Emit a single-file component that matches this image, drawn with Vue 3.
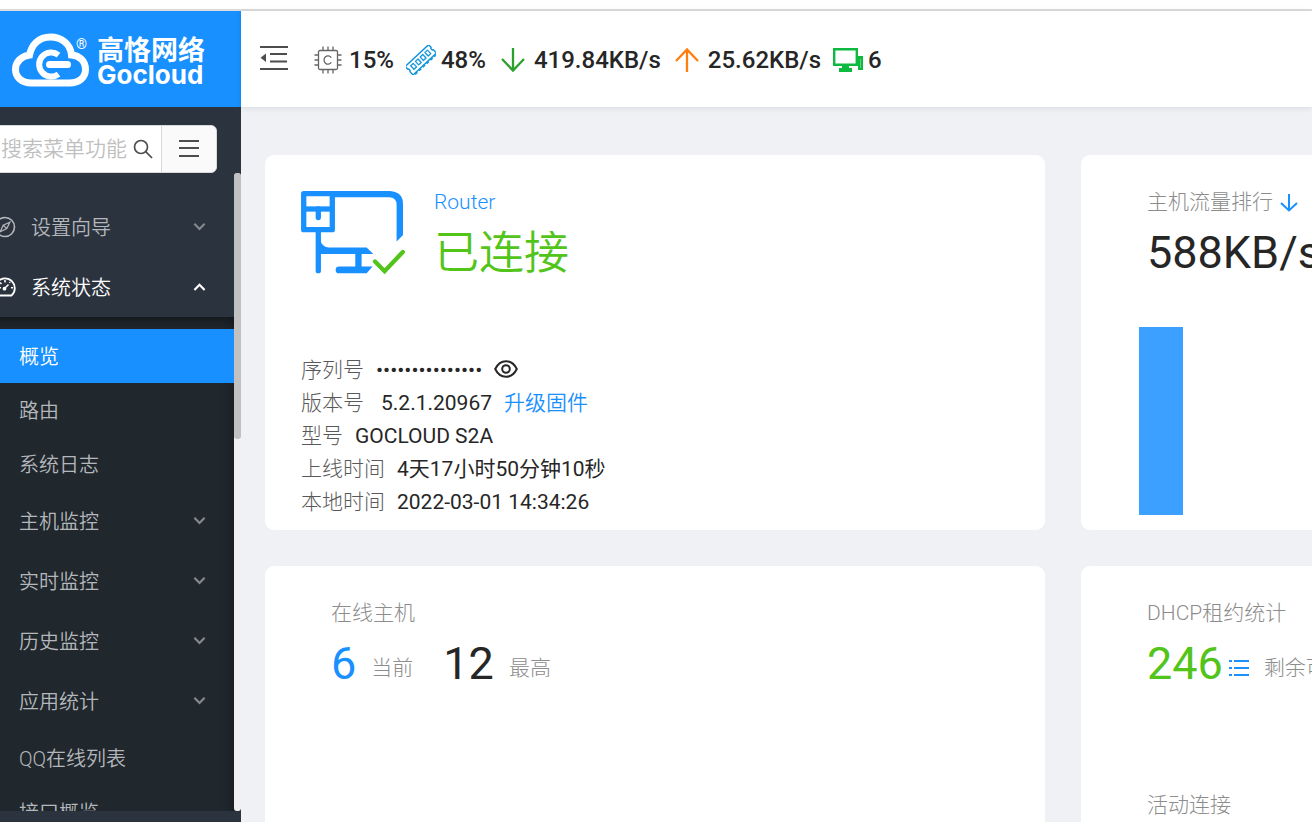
<script setup>
import { ref } from 'vue'

const keyword = ref('')
const showSerial = ref(false)

const topMenu = [
  { label: '设置向导', icon: 'compass', open: false },
  { label: '系统状态', icon: 'dashboard', open: true },
]

const subMenu = [
  { label: '概览', active: true },
  { label: '路由' },
  { label: '系统日志' },
  { label: '主机监控', group: true },
  { label: '实时监控', group: true },
  { label: '历史监控', group: true },
  { label: '应用统计', group: true },
  { label: 'QQ在线列表' },
  { label: '接口概览' },
]

const hostTraffic = [188]
</script>

<template>
  <div class="page">
    <div class="shell">
      <aside class="side">
        <a class="brand" href="#">
          <svg class="brand-mark" viewBox="0 0 78 56" aria-hidden="true">
            <path d="M20 50 H58 C68 50 74 44 74 36.500 C74 28 68 22.500 60 22 C59 11 50 4 39 4 C27 4 20 12 18 22 C10 23 4 29 4 36.500 C4 44 10 50 20 50 Z" fill="none" stroke="#fff" stroke-width="7" />
            <path d="M47 22 A12 12 0 1 0 47 41" fill="none" stroke="#fff" stroke-width="6" />
            <path d="M38 31.500 H56" stroke="#fff" stroke-width="7" stroke-linecap="round" />
          </svg>
          <span class="brand-reg">®</span>
          <span class="brand-text">
            <span class="brand-cn">高恪网络</span>
            <span class="brand-en">Gocloud</span>
          </span>
        </a>

        <form class="search" role="search" @submit.prevent>
          <input v-model="keyword" type="text" aria-label="搜索菜单功能" placeholder="搜索菜单功能" />
          <button class="search-go" type="submit" aria-label="搜索">
            <svg viewBox="0 0 20 20" width="20" height="20" fill="none" stroke="#4d4d4d" stroke-width="1.700">
              <circle cx="8" cy="8" r="6.500" />
              <path d="M12.700 12.700 L19 19" />
            </svg>
          </button>
          <button class="search-list" type="button" aria-label="菜单">
            <svg viewBox="0 0 20 18" width="20" height="18" stroke="#4d4d4d" stroke-width="2">
              <path d="M0 1 H20 M0 8 H20 M0 16 H20" />
            </svg>
          </button>
        </form>

        <div class="menu-scroll">
          <nav class="menu">
            <button v-for="item in topMenu" :key="item.label" type="button" class="item group top" :class="{ open: item.open }" :aria-expanded="item.open">
              <svg v-if="item.icon === 'compass'" class="item-icon" viewBox="0 0 22 22" fill="none" stroke="currentColor" stroke-width="1.600">
                <circle cx="11" cy="11" r="9.500" />
                <path d="M15.800 6.200 L12.800 12.600 L6.200 15.800 L9.200 9.200 Z M9.200 9.200 L12.800 12.600" stroke-width="1.300" />
              </svg>
              <svg v-else class="item-icon" viewBox="0 0 22 22" fill="none" stroke="currentColor" stroke-width="1.800">
                <path d="M4.500 19.500 A9.800 9.800 0 1 1 17.500 19.500 Z" />
                <path d="M10 13 L14.500 8.500 M11 4 V6.500 M17 11.700 H19 M4.500 11.700 H7 M6 6.500 L7.500 8 M15.500 6 L16.200 6.800" stroke-width="1.500" />
                <circle cx="10.500" cy="12.700" r="1" />
              </svg>
              <span>{{ item.label }}</span>
              <svg class="arrow" viewBox="0 0 14 10" fill="none" stroke="currentColor" stroke-width="2.300">
                <path :d="item.open ? 'M1.500 8.200 L7 2.500 L12.500 8.200' : 'M1.500 1.500 L7 7.200 L12.500 1.500'" />
              </svg>
            </button>

            <div class="sub">
              <template v-for="item in subMenu" :key="item.label">
                <button v-if="item.group" type="button" class="item group">
                  <span>{{ item.label }}</span>
                  <svg class="arrow" viewBox="0 0 14 10" fill="none" stroke="currentColor" stroke-width="2.300">
                    <path d="M1.500 1.500 L7 7.200 L12.500 1.500" />
                  </svg>
                </button>
                <a v-else href="#" class="item" :class="{ active: item.active }"><span>{{ item.label }}</span></a>
              </template>
            </div>
          </nav>
          <div class="track"><div class="thumb"></div></div>
        </div>
      </aside>

      <div class="body">
        <header class="bar">
          <button class="fold" type="button" aria-label="收起菜单">
            <svg viewBox="0 0 28 26" width="28" height="26" stroke="#4d4d4d" stroke-width="2.200">
              <path d="M0 2 H28 M10 9 H27 M10 16.500 H27 M0 24 H28" />
              <path d="M0.500 12.700 L6 8.500 V17 Z" fill="#4d4d4d" stroke="none" />
            </svg>
          </button>

          <span class="stat">
            <svg viewBox="0 0 28 28" width="28" height="28" fill="none" stroke="#666" stroke-width="1.300">
              <rect x="4.500" y="4.500" width="19" height="19" rx="1.500" />
              <path d="M9 4 V0.500 M14 4 V0.500 M19 4 V0.500 M9 24 V27.500 M14 24 V27.500 M19 24 V27.500 M4 9 H0.500 M4 14 H0.500 M4 19 H0.500 M24 9 H27.500 M24 14 H27.500 M24 19 H27.500" />
              <path d="M17.300 11.800 A3.900 4.200 0 1 0 17.300 16.200" />
            </svg>
            <span>15%</span>
          </span>

          <span class="stat memory">
            <svg viewBox="0 0 30 30" width="30" height="30" fill="none" stroke="#1296db" stroke-width="1.500">
              <g transform="rotate(-43 15 15)">
                <path d="M-1 9 H31 V12.500 A2 2 0 0 0 31 16 V20.500 H-1 V16 A2 2 0 0 0 -1 12.500 Z" />
                <path d="M1 21.500 H29" stroke-width="1.600" stroke-dasharray="3 2.200" />
                <path d="M3.500 12.200 H7 V17 H3.500 Z M10 12.200 H13.500 V17 H10 Z M16.500 12.200 H20 V17 H16.500 Z M23 12.200 H26.500 V17 H23 Z" stroke-width="1.300" stroke-linejoin="round" />
              </g>
            </svg>
            <span>48%</span>
          </span>

          <span class="stat rate">
            <svg viewBox="0 0 24 26" width="24" height="26" fill="none" stroke="#2ca02c" stroke-width="2.300">
              <path d="M12 1 V24 M1 12 L12 23.500 L23 12" />
            </svg>
            <span>419.84KB/s</span>
          </span>

          <span class="stat rate last">
            <svg viewBox="0 0 24 26" width="24" height="26" fill="none" stroke="#ff7f0e" stroke-width="2.300">
              <path d="M12 25 V2 M1 14 L12 2.500 L23 14" />
            </svg>
            <span>25.62KB/s</span>
          </span>

          <span class="stat hosts">
            <svg viewBox="0 0 30 24" width="30" height="24">
              <path d="M1.200 1.200 H23.800 V16.800 H1.200 Z" fill="none" stroke="#0dba3f" stroke-width="2.400" />
              <path d="M9 18 H16 V20 H19 V24 H6 V20 H9 Z M25 8 H30 V22 H25 Z" fill="#0dba3f" />
              <path d="M27.500 11 V20" stroke="#5fd382" stroke-width="1" />
            </svg>
            <span>6</span>
          </span>
        </header>

        <main class="cards">
          <section class="card router">
            <div class="router-head">
              <svg viewBox="0 0 104 84" width="104" height="84" fill="none" stroke="#1890ff" stroke-width="5.300">
                <path d="M2.700 2.700 H31.300 V38.700 H2.700 Z" stroke-linejoin="round" />
                <path d="M3 18 H31" />
                <path d="M17.300 18 V26.500 M17.300 40 V79.700" stroke-linecap="round" />
                <path d="M31 0 H89 Q102 1 102 13 V44 L95.600 50.600 V14 Q95.600 6.300 88 6.300 H31 Z" fill="#1890ff" stroke="none" />
                <path d="M19 48 Q21 56.600 28 56.600 H65.600 L72.300 63 H60.600 V75.600 H71.600 L65.600 82.300 H38 A3.300 3.300 0 0 1 38 75.600 H54.300 V63 H19 Z" fill="#1890ff" stroke="none" />
                <path d="M74 70.600 L83.600 80.200 L101.800 61" stroke="#52c41a" stroke-width="4.300" stroke-linecap="round" />
              </svg>
              <div>
                <a class="router-name" href="#">Router</a>
                <div class="router-state">已连接</div>
              </div>
            </div>
            <dl class="facts">
              <div>
                <dt>序列号</dt>
                <dd class="serial">•••••••••••••••</dd>
                <dd>
                  <button class="eye" type="button" aria-label="显示序列号" :aria-pressed="showSerial" @click="showSerial = !showSerial">
                    <svg viewBox="0 0 24 18" width="24" height="18" fill="none" stroke="#262626" stroke-width="2">
                      <path d="M1.200 9 Q5 1.200 12 1.200 T22.800 9 Q19 16.800 12 16.800 T1.200 9 Z" />
                      <circle cx="12" cy="9" r="3.800" />
                    </svg>
                  </button>
                </dd>
              </div>
              <div class="version"><dt>版本号</dt><dd>5.2.1.20967</dd><dd><a href="#">升级固件</a></dd></div>
              <div><dt>型号</dt><dd>GOCLOUD S2A</dd></div>
              <div><dt>上线时间</dt><dd>4天17小时50分钟10秒</dd></div>
              <div><dt>本地时间</dt><dd>2022-03-01 14:34:26</dd></div>
            </dl>
          </section>

          <section class="card stats">
            <h2>主机流量排行
              <svg viewBox="0 0 18 18" width="18" height="18" fill="none" stroke="#1890ff" stroke-width="2">
                <path d="M9 0 V17 M1 9 L9 16.500 L17 9" />
              </svg>
            </h2>
            <p class="figures"><strong>588KB/s</strong></p>
            <div class="chart">
              <div v-for="(height, i) in hostTraffic" :key="i" class="chart-bar" :style="{ height: height + 'px' }"></div>
            </div>
          </section>

          <section class="card stats">
            <h2>在线主机</h2>
            <p class="figures">
              <strong class="blue">6</strong><span class="note">当前</span>
              <strong class="next">12</strong><span class="note">最高</span>
            </p>
          </section>

          <section class="card stats">
            <h2>DHCP租约统计</h2>
            <p class="figures">
              <strong class="green">246</strong>
              <svg class="list" viewBox="0 0 20 16" width="20" height="16" stroke="#1890ff" stroke-width="2">
                <path d="M0 1 H3 M5 1 H20 M0 8 H3 M5 8 H20 M0 15 H3 M5 15 H20" />
              </svg>
              <span class="note">剩余可用</span>
            </p>
            <h2 class="second">活动连接</h2>
          </section>
        </main>
      </div>
    </div>
  </div>
</template>

<style>
body {
  overflow: hidden;
}
</style>

<style scoped>
.page {
  height: 100vh;
  box-sizing: border-box;
  padding-top: 9px;
  background: #fff;
  font-family: Roboto, "Noto Sans CJK SC", sans-serif;
  font-size: 21px;
  color: #262626;
  overflow: hidden;
}
.page *,
.page *::before {
  box-sizing: border-box;
}
button {
  border: 0;
  padding: 0;
  margin: 0;
  background: none;
  font: inherit;
  color: inherit;
  cursor: pointer;
}
a {
  color: #1890ff;
  text-decoration: none;
}
svg {
  flex: none;
}
.shell {
  display: flex;
  height: 100%;
  border-top: 2px solid #dcdcdc;
}

.side {
  display: flex;
  flex-direction: column;
  flex: none;
  width: 241px;
  background: #2b333e;
}
.brand {
  display: flex;
  align-items: flex-start;
  flex: none;
  height: 96px;
  padding: 22px 0 0 11px;
  background: #1890ff;
  color: #fff;
}
.brand-mark {
  width: 79px;
  height: 56px;
}
.brand-reg {
  width: 7px;
  margin-left: -14px;
  margin-right: 14px;
  font-size: 14px;
  line-height: 22px;
}
.brand-text {
  display: flex;
  flex-direction: column;
  padding-top: 4px;
  font-weight: 700;
}
.brand-cn {
  font-size: 27px;
  line-height: 28px;
}
.brand-en {
  font-family: Inter, sans-serif;
  font-weight: 700;
  font-size: 26px;
  line-height: 20px;
}
.search {
  display: flex;
  flex: none;
  height: 48px;
  margin: 18px 24px 0 -12px;
  border: 1px solid #d9d9d9;
  border-radius: 6px;
  background: #fff;
  overflow: hidden;
}
.search input {
  flex: 1;
  min-width: 0;
  border: 0;
  outline: 0;
  padding: 0 0 0 12px;
  background: none;
  font: inherit;
}
.search input::placeholder {
  color: #bfbfbf;
  font-weight: 350;
}
.search-go {
  display: flex;
  align-items: center;
  width: 28px;
}
.search-list {
  display: flex;
  align-items: center;
  justify-content: center;
  width: 55px;
  border-left: 1px solid #d9d9d9;
  background: #fafafa;
}
.menu-scroll {
  display: flex;
  flex: 1;
  min-height: 0;
  margin-bottom: 11px;
}
.menu {
  flex: 1;
  min-width: 0;
  padding-top: 24px;
  overflow: hidden;
  font-size: 20px;
  font-weight: 350;
}
.item {
  display: flex;
  align-items: center;
  width: 100%;
  height: 54px;
  padding-left: 19px;
  color: #b4b7bb;
}
.item > span {
  padding-bottom: 2px;
}
.item.group {
  height: 60px;
}
.item.top {
  padding-left: 0;
}
.item.open,
.item.active {
  color: #fff;
}
.item.active {
  background: #1890ff;
}
.item-icon {
  width: 22px;
  height: 22px;
  margin-left: -6px;
  margin-right: 15px;
}
.arrow {
  width: 13px;
  height: 10px;
  margin-left: auto;
  margin-right: 28px;
  color: #85898d;
}
.item.open .arrow {
  color: #fff;
}
.sub {
  margin-left: -12px;
  padding: 12px 0 0 12px;
  background: #20272d;
  box-shadow: inset 0 3px 12px rgba(0, 0, 0, 0.45);
}
.sub .item.active {
  margin-left: -12px;
  padding-left: 31px;
  width: calc(100% + 12px);
}
.track {
  width: 7px;
  border-radius: 3px;
  background: linear-gradient(#c1c1c1 20px, #f1f1f1 20px);
  overflow: hidden;
}
.thumb {
  height: 266px;
  border-radius: 3px;
  background: #c1c1c1;
}

.body {
  display: flex;
  flex-direction: column;
  flex: 1;
  min-width: 0;
  background: #f0f1f5;
}
.bar {
  display: flex;
  align-items: center;
  flex: none;
  height: 96px;
  padding: 2px 0 0 19px;
  background: #fff;
  box-shadow: 0 1px 6px rgba(0, 21, 41, 0.1);
  font-size: 24px;
  font-weight: 500;
  white-space: nowrap;
}
.fold {
  display: flex;
  margin-right: 26px;
  margin-bottom: 4px;
}
.stat {
  display: flex;
  align-items: center;
  gap: 7px;
  margin-right: 12px;
}
.stat.memory,
.stat.hosts {
  gap: 5px;
}
.stat.memory {
  margin-right: 15px;
}
.stat.rate {
  gap: 9px;
  margin-right: 14px;
}
.stat.last {
  margin-right: 12px;
}

.cards {
  display: grid;
  grid-template-columns: repeat(2, 74.5%);
  grid-auto-rows: 375px;
  gap: 36px;
  flex: 1;
  min-height: 0;
  padding: 48px 0 0 24px;
  overflow: hidden;
}
.card {
  border-radius: 9px;
  background: #fff;
}
.router {
  display: flex;
  flex-direction: column;
  justify-content: space-between;
  padding: 31px 36px 11px;
}
.router-head {
  display: flex;
  gap: 29px;
}
.router-head > svg {
  margin-top: 5px;
}
.router-name {
  display: block;
  line-height: 33px;
  font-weight: 350;
}
.router-state {
  font-size: 45px;
  line-height: 70px;
  font-weight: 350;
  color: #52c41a;
}
.facts {
  margin: 0;
}
.facts > div {
  display: flex;
  align-items: center;
  gap: 12px;
  height: 33px;
  line-height: 33px;
}
.facts .version dt {
  margin-right: 5px;
}
.facts a {
  font-weight: 350;
}
dt {
  color: #595959;
  font-weight: 300;
}
dd {
  margin: 0;
}
.eye {
  display: flex;
  margin-bottom: 3px;
}
.stats {
  padding: 31px 66px 15px;
}
.stats h2 {
  display: flex;
  align-items: center;
  gap: 7px;
  margin: 0;
  font-size: 21px;
  line-height: 33px;
  font-weight: 300;
  color: #8c8c8c;
}
.figures {
  display: flex;
  align-items: center;
  margin: 0;
  line-height: 68px;
  white-space: nowrap;
}
.figures strong {
  font-size: 45px;
  font-weight: 400;
}
.figures .blue {
  color: #1890ff;
}
.figures .green {
  color: #52c41a;
}
.figures .next {
  margin-left: 30px;
}
.note {
  padding-top: 9px;
  line-height: 33px;
  margin-left: 15px;
  font-weight: 300;
  color: #8c8c8c;
}
.list {
  margin: 8px 0 0 6px;
}
.chart {
  display: flex;
  align-items: flex-end;
  height: 228px;
  margin-left: -8px;
}
.chart-bar {
  width: 44px;
  background: #3ba0ff;
}
.stats .second {
  margin-top: 91px;
}
</style>
